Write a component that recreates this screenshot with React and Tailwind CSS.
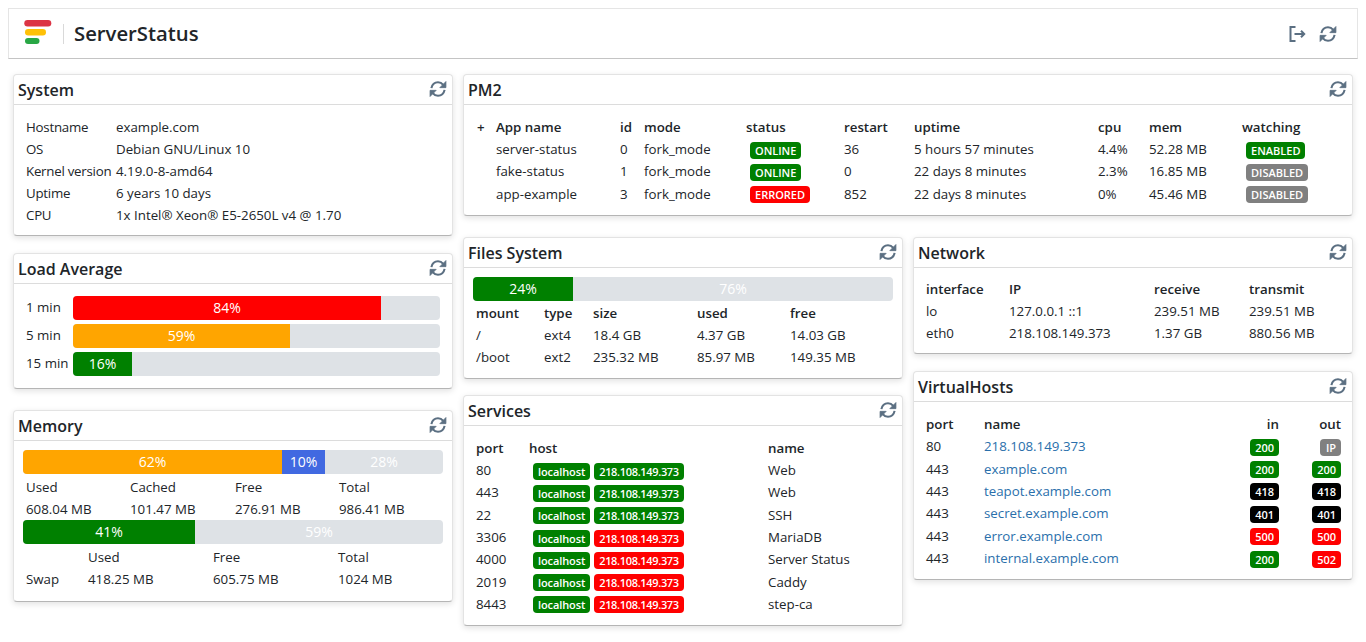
import React from "react";

const F = { fontFamily: '"Open Sans", "Noto Sans", sans-serif' };

function Sync({ className = "" }) {
  return (
    <svg viewBox="0 0 24 24" className={className} fill="none" stroke="#5b6f82" strokeWidth="2.8" strokeLinecap="butt" strokeLinejoin="miter">
      <path d="M3.2 10.8C4.2 6.2 7.8 3 12 3c2.9 0 5.2 1.3 7 3.6" />
      <path d="M22.6 2v8.2h-8.2z" fill="#5b6f82" strokeWidth="1" />
      <path d="M20.8 13.2C19.8 17.8 16.2 21 12 21c-2.9 0-5.2-1.3-7-3.6" />
      <path d="M1.4 22v-8.2h8.2z" fill="#5b6f82" strokeWidth="1" />
    </svg>
  );
}

function Card({ title, className = "", bodyClass = "", children }) {
  return (
    <section className={`bg-white rounded-[4px] border border-[#e3e3e3] border-b-[#b5b5b5] shadow-[0_2px_6px_rgba(0,0,0,0.12)] ${className}`}>
      <header className="h-[30px] flex items-center justify-between pl-[4px] pr-[5px] border-b border-[#dcdcdc]">
        <h2 className="text-[16px] font-semibold text-[#212529] leading-none">{title}</h2>
        <Sync className="w-[18px] h-[18px] mb-[2px]" />
      </header>
      <div className={bodyClass}>{children}</div>
    </section>
  );
}

function Badge({ c, className = "", children }) {
  return <span className={`inline-block rounded-[4px] px-[5px] text-[11px] leading-[17px] font-semibold text-white align-top ${c} ${className}`}>{children}</span>;
}

const G = "bg-[#008000]";
const R = "bg-[#ff0000]";
const K = "bg-black";
const Y = "bg-[#808080]";

function Bar({ segs }) {
  return (
    <div className="h-[24px] flex bg-[#dee2e6] rounded-[4px] overflow-hidden text-[14px] text-white leading-[24px] text-center">
      {segs.map(([w, c, t], i) => (
        <div key={i} className={c} style={{ width: w + "px" }}>{t}</div>
      ))}
    </div>
  );
}

function Th({ children, className = "" }) {
  return <th className={`font-semibold text-left p-0 ${className}`}>{children}</th>;
}

function System() {
  const rows = [
    ["Hostname", "example.com"],
    ["OS", "Debian GNU/Linux 10"],
    ["Kernel version", "4.19.0-8-amd64"],
    ["Uptime", "6 years 10 days"],
    ["CPU", "1x Intel® Xeon® E5-2650L v4 @ 1.70"],
  ];
  return (
    <Card title="System" className="h-[162px]" bodyClass="pt-[12px] pl-[12px]">
      <table className="border-collapse table-fixed">
        <colgroup><col className="w-[90px]" /><col className="w-[300px]" /></colgroup>
        <tbody>
          {rows.map(([a, b]) => (
            <tr key={a} className="h-[22px]">
              <td className="p-0 whitespace-nowrap tracking-[-0.25px]">{a}</td>
              <td className="p-0 whitespace-nowrap">{b}</td>
            </tr>
          ))}
        </tbody>
      </table>
    </Card>
  );
}

function Load() {
  const rows = [
    ["1 min", 308, R, "84%"],
    ["5 min", 217, "bg-[#ffa500]", "59%"],
    ["15 min", 59, G, "16%"],
  ];
  return (
    <Card title="Load Average" className="h-[136px] mt-[17px]" bodyClass="pt-[12px] px-[12px] flex flex-col gap-[4px]">
      {rows.map(([l, w, c, t]) => (
        <div key={l} className="flex items-center">
          <span className="w-[47px] shrink-0 whitespace-nowrap">{l}</span>
          <div className="flex-1"><Bar segs={[[w, c, t]]} /></div>
        </div>
      ))}
    </Card>
  );
}

function Memory() {
  return (
    <Card title="Memory" className="h-[192px] mt-[21px]" bodyClass="pt-[9px] px-[9px]">
      <Bar segs={[[259, "bg-[#ffa500]", "62%"], [43, "bg-[#4169e1]", "10%"], [118, "", "28%"]]} />
      <div className="grid grid-cols-[104px_105px_104px_1fr] pl-[3px] leading-[22px] mt-[2px]">
        <span>Used</span><span>Cached</span><span>Free</span><span>Total</span>
        <span>608.04 MB</span><span>101.47 MB</span><span>276.91 MB</span><span>986.41 MB</span>
      </div>
      <Bar segs={[[172, G, "41%"], [248, "", "59%"]]} />
      <div className="grid grid-cols-[62px_125px_125px_1fr] pl-[3px] leading-[22px] mt-[2px]">
        <span></span><span>Used</span><span>Free</span><span>Total</span>
        <span>Swap</span><span>418.25 MB</span><span>605.75 MB</span><span>1024 MB</span>
      </div>
    </Card>
  );
}

function PM2() {
  const rows = [
    ["server-status", "0", "ONLINE", G, "36", "5 hours 57 minutes", "4.4%", "52.28 MB", "ENABLED", G],
    ["fake-status", "1", "ONLINE", G, "0", "22 days 8 minutes", "2.3%", "16.85 MB", "DISABLED", Y],
    ["app-example", "3", "ERRORED", R, "852", "22 days 8 minutes", "0%", "45.46 MB", "DISABLED", Y],
  ];
  return (
    <Card title="PM2" className="h-[142px]" bodyClass="pt-[12px] pl-[13px]">
      <table className="border-collapse table-fixed w-[850px]">
        <colgroup>
          <col className="w-[19px]" /><col className="w-[124px]" /><col className="w-[24px]" /><col className="w-[102px]" />
          <col className="w-[98px]" /><col className="w-[70px]" /><col className="w-[184px]" /><col className="w-[51px]" /><col className="w-[93px]" /><col />
        </colgroup>
        <thead>
          <tr className="h-[22px]">
            <Th>+</Th><Th>App name</Th><Th>id</Th><Th>mode</Th><Th>status</Th><Th>restart</Th><Th>uptime</Th><Th>cpu</Th><Th>mem</Th><Th>watching</Th>
          </tr>
        </thead>
        <tbody>
          {rows.map((r, i) => (
            <tr key={r[0]} className={i === 2 ? "h-[23px]" : "h-[22px]"}>
              <td className="p-0"></td>
              <td className="p-0">{r[0]}</td>
              <td className="p-0">{r[1]}</td>
              <td className="p-0">fork_mode</td>
              <td className="p-0 pl-[4px] leading-[17px]"><Badge c={r[3]}>{r[2]}</Badge></td>
              <td className="p-0">{r[4]}</td>
              <td className="p-0 whitespace-nowrap">{r[5]}</td>
              <td className="p-0">{r[6]}</td>
              <td className="p-0">{r[7]}</td>
              <td className="p-0 pl-[4px] leading-[17px]"><Badge c={r[9]}>{r[8]}</Badge></td>
            </tr>
          ))}
        </tbody>
      </table>
    </Card>
  );
}

function Files() {
  const rows = [
    ["/", "ext4", "18.4 GB", "4.37 GB", "14.03 GB"],
    ["/boot", "ext2", "235.32 MB", "85.97 MB", "149.35 MB"],
  ];
  return (
    <Card title="Files System" className="h-[142px]" bodyClass="pt-[9px] px-[9px]">
      <Bar segs={[[100, G, "24%"], [320, "", "76%"]]} />
      <table className="border-collapse table-fixed w-[417px] ml-[3px] mt-[2px]">
        <colgroup>
          <col className="w-[68px]" /><col className="w-[49px]" /><col className="w-[104px]" /><col className="w-[93px]" /><col />
        </colgroup>
        <thead>
          <tr className="h-[22px]"><Th>mount</Th><Th>type</Th><Th>size</Th><Th>used</Th><Th>free</Th></tr>
        </thead>
        <tbody>
          {rows.map((r) => (
            <tr key={r[0]} className="h-[22px]">{r.map((v, i) => <td key={i} className="p-0">{v}</td>)}</tr>
          ))}
        </tbody>
      </table>
    </Card>
  );
}

function Services() {
  const rows = [
    ["80", G, "Web"], ["443", G, "Web"], ["22", G, "SSH"], ["3306", R, "MariaDB"],
    ["4000", R, "Server Status"], ["2019", R, "Caddy"], ["8443", R, "step-ca"],
  ];
  return (
    <Card title="Services" className="h-[231px] mt-[16px]" bodyClass="pt-[12px] pl-[12px]">
      <table className="border-collapse table-fixed w-[420px]">
        <colgroup><col className="w-[53px]" /><col className="w-[239px]" /><col /></colgroup>
        <thead><tr className="h-[22px]"><Th>port</Th><Th>host</Th><Th>name</Th></tr></thead>
        <tbody>
          {rows.map(([p, c, n]) => (
            <tr key={p} className="h-[22.3px]">
              <td className="p-0">{p}</td>
              <td className="p-0 pl-[4px] whitespace-nowrap leading-[17px]">
                <div className="flex gap-[4px]">
                  <Badge c={G} className="tracking-[-0.1px]">localhost</Badge>
                  <Badge c={c} className="tracking-[-0.33px]">218.108.149.373</Badge>
                </div>
              </td>
              <td className="p-0">{n}</td>
            </tr>
          ))}
        </tbody>
      </table>
    </Card>
  );
}

function Network() {
  const rows = [
    ["lo", "127.0.0.1 ::1", "239.51 MB", "239.51 MB"],
    ["eth0", "218.108.149.373", "1.37 GB", "880.56 MB"],
  ];
  return (
    <Card title="Network" className="h-[117px]" bodyClass="pt-[11px] pl-[12px]">
      <table className="border-collapse table-fixed w-[420px]">
        <colgroup><col className="w-[83px]" /><col className="w-[145px]" /><col className="w-[95px]" /><col /></colgroup>
        <thead><tr className="h-[22px]"><Th>interface</Th><Th>IP</Th><Th>receive</Th><Th>transmit</Th></tr></thead>
        <tbody>
          {rows.map((r) => (
            <tr key={r[0]} className="h-[22px]">{r.map((v, i) => <td key={i} className="p-0">{v}</td>)}</tr>
          ))}
        </tbody>
      </table>
    </Card>
  );
}

function VHosts() {
  const rows = [
    ["80", "218.108.149.373", "200", G, "IP", Y],
    ["443", "example.com", "200", G, "200", G],
    ["443", "teapot.example.com", "418", K, "418", K],
    ["443", "secret.example.com", "401", K, "401", K],
    ["443", "error.example.com", "500", R, "500", R],
    ["443", "internal.example.com", "200", G, "502", R],
  ];
  return (
    <Card title="VirtualHosts" className="h-[209px] mt-[17px]" bodyClass="pt-[12px] pl-[12px]">
      <table className="border-collapse table-fixed w-[415px]">
        <colgroup><col className="w-[58px]" /><col className="w-[232px]" /><col /><col className="w-[62px]" /></colgroup>
        <thead>
          <tr className="h-[22px]"><Th>port</Th><Th>name</Th><Th className="text-right">in</Th><Th className="text-right">out</Th></tr>
        </thead>
        <tbody>
          {rows.map((r) => (
            <tr key={r[1]} className="h-[22.4px]">
              <td className="p-0">{r[0]}</td>
              <td className="p-0 text-[#2a6fab]">{r[1]}</td>
              <td className="p-0 text-right leading-[17px]"><Badge c={r[3]} className="pl-[5.5px]">{r[2]}</Badge></td>
              <td className="p-0 text-right leading-[17px]"><Badge c={r[5]} className="pl-[5.5px]">{r[4]}</Badge></td>
            </tr>
          ))}
        </tbody>
      </table>
    </Card>
  );
}

export default function App() {
  return (
    <div className="w-[1366px] h-[642px] bg-white text-[13.3px] text-[#212529] overflow-hidden pt-[8px]" style={F}>
      <header className="mx-[8px] w-[1350px] h-[51px] flex items-center justify-between border border-[#e5e5e5] border-b-[#c4c4c4] pl-[15px] pr-[20px]">
        <div className="flex items-center">
          <svg width="28" height="26" viewBox="0 0 28 26" className="shrink-0 -mt-[1px]">
            <rect x="0.3" y="0" width="27" height="6.5" rx="3.2" fill="#dc3545" />
            <rect x="1" y="9" width="21" height="6.5" rx="3.2" fill="#ffc107" />
            <rect x="1" y="18" width="14.5" height="6" rx="3" fill="#28a745" />
          </svg>
          <div className="w-px h-[20px] bg-[#d9d9d9] ml-[11px] mr-[10px]"></div>
          <h1 className="text-[20.3px] font-semibold text-[#212529] leading-none">ServerStatus</h1>
        </div>
        <div className="flex items-center gap-[13px]">
          <svg viewBox="0 0 18 18" className="w-[18px] h-[18px]" fill="none" stroke="#5b6f82" strokeWidth="2" strokeLinecap="butt" strokeLinejoin="miter">
            <path d="M7.5 2H2.5v14h5" />
            <path d="M6.5 9H16" />
            <path d="M13 5.8l3.2 3.2-3.2 3.2" />
          </svg>
          <Sync className="w-[18px] h-[18px]" />
        </div>
      </header>
      <main className="flex gap-[10px] pl-[13px] mt-[15px]">
        <div className="w-[440px]">
          <System />
          <Load />
          <Memory />
        </div>
        <div className="w-[890px]">
          <PM2 />
          <div className="flex gap-[10px] mt-[21px] items-start">
            <div className="w-[440px]">
              <Files />
              <Services />
            </div>
            <div className="w-[440px]">
              <Network />
              <VHosts />
            </div>
          </div>
        </div>
      </main>
    </div>
  );
}
